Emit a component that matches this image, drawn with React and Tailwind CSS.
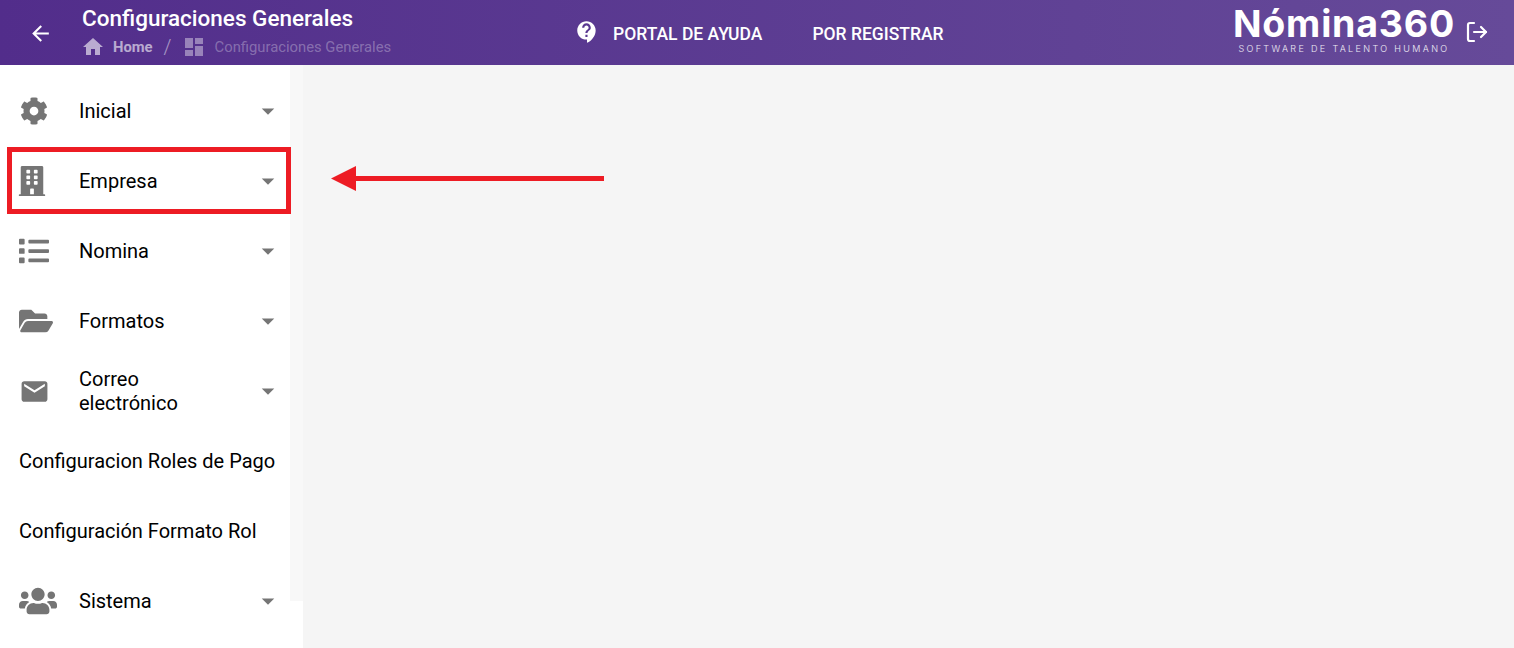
import React from 'react'
import { FaCog, FaBuilding, FaList, FaFolderOpen, FaUsers } from 'react-icons/fa'
import { MdEmail, MdArrowBack, MdHome, MdDashboard, MdContactSupport, MdArrowDropDown } from 'react-icons/md'
import { LogOut } from 'lucide-react'

const menu = [
  { label: 'Inicial', icon: FaCog, size: 28, shift: 'ml-[1px]', arrow: true },
  { label: 'Empresa', icon: FaBuilding, size: 30, shift: '-ml-[2px]', arrow: true },
  { label: 'Nomina', icon: FaList, size: 30, shift: '', arrow: true },
  { label: 'Formatos', icon: FaFolderOpen, size: 34, shift: '', arrow: true },
  { label: 'Correo electrónico', icon: MdEmail, size: 31, shift: '', arrow: true },
  { label: 'Configuracion Roles de Pago' },
  { label: 'Configuración Formato Rol' },
  { label: 'Sistema', icon: FaUsers, size: 38, shift: '', arrow: true },
]

function MenuItem({ item }) {
  const Icon = item.icon
  if (!Icon) {
    return (
      <div className="h-[70px] flex items-center pl-[19px] text-[20px] leading-6 text-black whitespace-nowrap">
        {item.label}
      </div>
    )
  }
  return (
    <div className="h-[70px] flex items-center text-[20px] leading-6 text-black">
      <div className="w-[79px] shrink-0 pl-[19px]">
        <Icon size={item.size} className={`text-[#757575] ${item.shift}`} />
      </div>
      <span className="w-[150px]">{item.label}</span>
      <MdArrowDropDown size={30} className="text-[#757575] ml-auto mr-[7px]" />
    </div>
  )
}

export default function App() {
  return (
    <div className="relative w-[1514px] h-[648px] overflow-hidden bg-[#f5f5f5] font-['Roboto',sans-serif]">
      {/* Header */}
      <header className="h-[65px] flex items-center bg-gradient-to-r from-[#522d8b] to-[#664a99] text-white">
        <div className="w-[82px] shrink-0 pl-[28px] pt-[1px]">
          <MdArrowBack size={25} />
        </div>
        <div className="w-[494px] shrink-0">
          <div className="text-[22.5px] leading-6 font-medium -mt-[1px] whitespace-nowrap">Configuraciones Generales</div>
          <div className="flex items-center h-[22px] mt-[6px] text-[14.8px] text-white/50">
            <MdHome size={24} className="text-white/60 -ml-[1px]" />
            <span className="ml-[8px] font-bold text-white/60">Home</span>
            <span className="ml-[11px] text-[20px] font-light">/</span>
            <MdDashboard size={24} className="ml-[10px] text-white/40" />
            <span className="ml-[9px] text-white/30">Configuraciones Generales</span>
          </div>
        </div>
        <div className="flex items-center font-medium text-[17.5px] mt-[3px]">
          <MdContactSupport size={26} className="-ml-[2px] -mt-[4px]" />
          <span className="ml-[13px]">PORTAL DE AYUDA</span>
          <span className="ml-[50px]">POR REGISTRAR</span>
        </div>
        <div className="ml-auto flex flex-col items-center w-[224px] font-['Inter',sans-serif] -mt-[5px]">
          <span className="text-[37.5px] leading-[34px] font-bold tracking-[0.8px] whitespace-nowrap">Nómina360</span>
          <span className="mt-[3px] text-[9px] leading-[10px] font-light tracking-[2.35px] text-white/90 whitespace-nowrap">SOFTWARE DE TALENTO HUMANO</span>
        </div>
        <div className="ml-[9px] mr-[25px] -mt-[1px]">
          <LogOut size={24} strokeWidth={2.2} />
        </div>
      </header>

      {/* Sidebar */}
      <div className="flex">
        <aside className="w-[303px] h-[583px] bg-white flex items-start">
          <nav className="w-[290px] pt-[11px]">
            {menu.map(item => <MenuItem key={item.label} item={item} />)}
          </nav>
          <div className="w-[13px] h-[536px] bg-[#f8f8f8]" />
        </aside>
      </div>

      {/* Annotation over the screenshot */}
      <div className="absolute left-[7px] top-[147px] w-[284px] h-[67px] border-[5px] border-[#ed1c24]" />
      <svg className="absolute left-[330px] top-[165px]" width="276" height="27" viewBox="0 0 276 27">
        <path d="M1 13.5 L26 1 V26 Z" fill="#ed1c24" />
        <rect x="25" y="11" width="249" height="5" fill="#ed1c24" />
      </svg>
    </div>
  )
}
